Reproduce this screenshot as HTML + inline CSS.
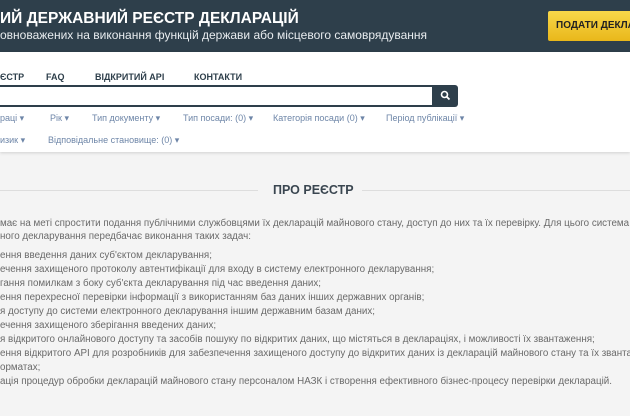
<!DOCTYPE html><html><head><meta charset="utf-8"><style>
*{margin:0;padding:0;box-sizing:border-box}
body{width:630px;height:416px;overflow:hidden;background:#f4f4f4;font-family:"Liberation Sans","DejaVu Sans",sans-serif;position:relative}
.a{position:absolute;white-space:nowrap}
#hd{position:absolute;left:0;top:0;width:630px;height:52px;background:#2e3f4b}
#wh{position:absolute;left:0;top:52px;width:630px;height:100px;background:#fff;box-shadow:0 1px 3px rgba(0,0,0,.15)}
.nav{font-size:9px;font-weight:bold;color:#2e3f4b;top:72px}
.f{font-size:9px;color:#6e86a8}
.t{font-size:9.8px;color:#6a6a6a;left:0}
</style></head><body>
<div id="hd"></div>
<div class="a" style="left:0;top:10px;font-size:15.5px;font-weight:bold;color:#fff">ИЙ ДЕРЖАВНИЙ РЕЄСТР ДЕКЛАРАЦІЙ</div>
<div class="a" style="left:0;top:28px;font-size:12px;color:#e8ecef">овноважених на виконання функцій держави або місцевого самоврядування</div>
<div class="a" style="left:548px;top:11px;width:90px;height:30px;background:linear-gradient(#f8d84a,#e9b71a);border-radius:2px;font-size:10px;font-weight:bold;color:#222;padding:9px 0 0 8px">ПОДАТИ ДЕКЛАРАЦІЮ</div>
<div id="wh"></div>
<div class="a nav" style="left:0">ЄСТР</div>
<div class="a nav" style="left:46px">FAQ</div>
<div class="a nav" style="left:95px">ВІДКРИТИЙ API</div>
<div class="a nav" style="left:194px">КОНТАКТИ</div>
<div class="a" style="left:-2px;top:85px;width:436px;height:22px;border:2px solid #2e3f4b;border-radius:2px;background:#fff"></div>
<div class="a" style="left:432px;top:85px;width:26px;height:22px;background:#2e3f4b;border-radius:0 3px 3px 0"></div>
<svg class="a" style="left:440px;top:90px" width="11" height="11" viewBox="0 0 11 11"><circle cx="4.5" cy="4.5" r="3" fill="none" stroke="#fff" stroke-width="1.6"/><path d="M6.7 6.7L9.5 9.5" stroke="#fff" stroke-width="1.8"/></svg>
<div class="a f" style="left:0;top:113px">раці ▾</div>
<div class="a f" style="left:50px;top:113px">Рік ▾</div>
<div class="a f" style="left:92px;top:113px">Тип документу ▾</div>
<div class="a f" style="left:183px;top:113px">Тип посади: (0) ▾</div>
<div class="a f" style="left:273px;top:113px">Категорія посади (0) ▾</div>
<div class="a f" style="left:386px;top:113px">Період публікації ▾</div>
<div class="a f" style="left:0;top:135px">изик ▾</div>
<div class="a f" style="left:48px;top:135px">Відповідальне становище: (0) ▾</div>
<div class="a" style="left:0;top:190px;width:258px;height:1px;background:#ddd"></div>
<div class="a" style="left:362px;top:190px;width:268px;height:1px;background:#ddd"></div>
<div class="a" style="left:273px;top:183px;font-size:12.5px;font-weight:bold;color:#3a4650">ПРО РЕЄСТР</div>
<div class="a t" style="top:218px">має на меті спростити подання публічними службовцями їх декларацій майнового стану, доступ до них та їх перевірку. Для цього система</div>
<div class="a t" style="top:231px">ного декларування передбачає виконання таких задач:</div>
<div class="a t" style="top:250px">ення введення даних суб'єктом декларування;</div>
<div class="a t" style="top:264px">ечення захищеного протоколу автентифікації для входу в систему електронного декларування;</div>
<div class="a t" style="top:278px">гання помилкам з боку суб'єкта декларування під час введення даних;</div>
<div class="a t" style="top:292px">ення перехресної перевірки інформації з використанням баз даних інших державних органів;</div>
<div class="a t" style="top:306px">я доступу до системи електронного декларування іншим державним базам даних;</div>
<div class="a t" style="top:320px">ечення захищеного зберігання введених даних;</div>
<div class="a t" style="top:334px">я відкритого онлайнового доступу та засобів пошуку по відкритих даних, що містяться в деклараціях, і можливості їх звантаження;</div>
<div class="a t" style="top:348px">ення відкритого API для розробників для забезпечення захищеного доступу до відкритих даних із декларацій майнового стану та їх звантаження</div>
<div class="a t" style="top:362px">орматах;</div>
<div class="a t" style="top:376px">ація процедур обробки декларацій майнового стану персоналом НАЗК і створення ефективного бізнес-процесу перевірки декларацій.</div>
</body></html>
